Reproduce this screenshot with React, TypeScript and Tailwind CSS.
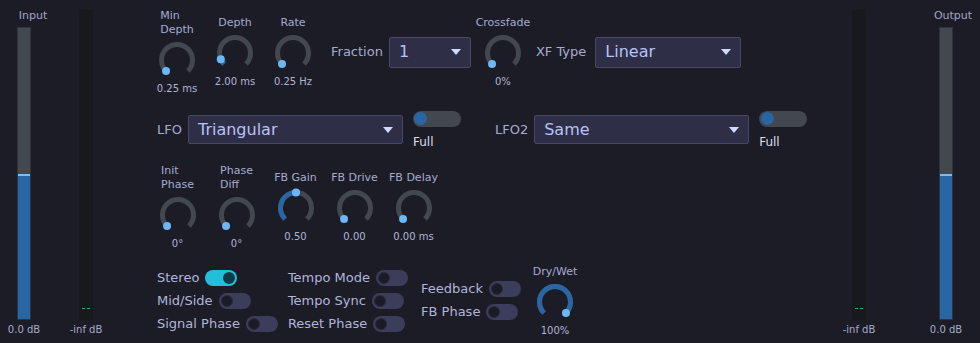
import React from 'react';

const R = 15.5;
function pt(deg: number): [number, number] {
  const r = (deg * Math.PI) / 180;
  return [18 + R * Math.sin(r), 18 - R * Math.cos(r)];
}

function KnobSvg({ v }: { v: number }) {
  const [sx, sy] = pt(-135);
  const [ex, ey] = pt(135);
  const a = -135 + 270 * v;
  const [vx, vy] = pt(a);
  const sweep = 270 * v;
  return (
    <svg width="36" height="36" viewBox="0 0 36 36" className="block overflow-visible">
      <path d={`M ${sx} ${sy} A ${R} ${R} 0 1 1 ${ex} ${ey}`} fill="none" stroke="#43474e" strokeWidth="5" />
      {v > 0 && (
        <path
          d={`M ${sx} ${sy} A ${R} ${R} 0 ${sweep > 180 ? 1 : 0} 1 ${vx} ${vy}`}
          fill="none"
          stroke="#2a66a3"
          strokeWidth="5"
        />
      )}
      <circle cx={vx} cy={vy} r="4" fill="#6cb8f6" />
    </svg>
  );
}

function Knob({
  label,
  value,
  v = 0,
  className = '',
}: {
  label: React.ReactNode;
  value: string;
  v?: number;
  className?: string;
}) {
  return (
    <div className={`flex flex-col items-center gap-[5px] ${className}`}>
      <div className="whitespace-nowrap text-left text-[11px] leading-[14px] text-[#a6abd0]">{label}</div>
      <KnobSvg v={v} />
      <div className="whitespace-nowrap text-[10px] leading-[12px] text-[#b0b4d4]">{value}</div>
    </div>
  );
}

function Toggle({ on = false }: { on?: boolean }) {
  return on ? (
    <div className="flex h-[16px] w-[32px] shrink-0 items-center justify-end rounded-full bg-[#22bfdb] px-[2px]">
      <div className="h-[12px] w-[12px] rounded-full bg-[#0c3a45]" />
    </div>
  ) : (
    <div className="flex h-[16px] w-[32px] shrink-0 items-center rounded-full bg-[#3c3c5b] px-[2px]">
      <div className="h-[12px] w-[12px] rounded-full border border-[#2a2a3c] bg-[#1b1b27]" />
    </div>
  );
}

function WideToggle() {
  return (
    <div className="flex flex-col items-start">
      <div className="flex h-[16px] w-[48px] items-center rounded-full bg-[#43474e] px-[1.5px]">
        <div className="h-[13px] w-[13px] rounded-full bg-[#2a66a3]" />
      </div>
      <div className="mt-[8px] whitespace-nowrap text-[12px] leading-[14px] text-[#dcdde8]">Full</div>
    </div>
  );
}

function Dropdown({ text, className = '' }: { text: string; className?: string }) {
  return (
    <div
      className={`flex items-center justify-between rounded-[2px] border border-[#464868] bg-[#2e2f47] pl-[9px] pr-[9px] ${className}`}
    >
      <span className="whitespace-nowrap text-[16px] leading-none text-[#b9c1f6]">{text}</span>
      <svg width="10" height="6" viewBox="0 0 10 6" className="block">
        <path d="M0 0 L10 0 L5 6 Z" fill="#d4d8fb" />
      </svg>
    </div>
  );
}

function LevelMeter() {
  return (
    <div className="flex h-[293px] w-[14px] flex-col justify-end border border-[#30333a] bg-[#43474e]">
      <div className="h-[2px] bg-[#7cbcf5]" />
      <div className="h-[143px] bg-[#2a66a3]" />
    </div>
  );
}

function DarkMeter() {
  return (
    <div className="flex h-[311px] w-[14px] flex-col items-center justify-end bg-[#18191c] pb-[11px]">
      <div className="flex gap-[2px]">
        <div className="h-[1px] w-[3px] bg-[#1fb36b]" />
        <div className="h-[1px] w-[3px] bg-[#1fb36b]" />
      </div>
    </div>
  );
}

function Labeled({ text, on }: { text: string; on?: boolean }) {
  return (
    <div className="flex h-[23px] items-center gap-[6px]">
      <span className="whitespace-nowrap text-[13px] leading-[16px] text-[#b0b5da]">{text}</span>
      <Toggle on={on} />
    </div>
  );
}

export default function App() {
  return (
    <div className="flex h-[343px] w-[980px] overflow-hidden bg-[#1c1c27] font-['DejaVu_Sans',sans-serif]">
      {/* left meters */}
      <div className="flex">
        <div className="flex w-[48px] flex-col items-center pt-[9px]">
          <div className="ml-[18px] h-[18px] whitespace-nowrap text-[11px] leading-[14px] text-[#a0a5c7]">Input</div>
          <LevelMeter />
          <div className="mt-[4px] whitespace-nowrap text-[10px] leading-[12px] text-[#a6abcb]">0.0 dB</div>
        </div>
        <div className="ml-[18px] flex w-[40px] flex-col items-center pt-[9px]">
          <DarkMeter />
          <div className="mt-[4px] whitespace-nowrap text-[10px] leading-[12px] text-[#a6abcb]">-inf dB</div>
        </div>
      </div>

      {/* center */}
      <div className="ml-[42px] flex flex-1 flex-col pt-[9px]">
        <div className="flex h-[86px] items-center">
          <Knob className="w-[58px]" label={<>Min<br />Depth</>} value="0.25 ms" v={0} />
          <Knob className="w-[58px]" label="Depth" value="2.00 ms" v={0.08} />
          <Knob className="w-[58px]" label="Rate" value="0.25 Hz" v={0} />
          <span className="ml-[9px] whitespace-nowrap text-[13px] text-[#a6abd0]">Fraction</span>
          <Dropdown className="ml-[6px] h-[31px] w-[82px]" text="1" />
          <Knob className="ml-[3px] w-[58px]" label="Crossfade" value="0%" v={0} />
          <span className="ml-[4px] whitespace-nowrap text-[13px] text-[#a6abd0]">XF Type</span>
          <Dropdown className="ml-[9px] h-[31px] w-[146px]" text="Linear" />
        </div>

        <div className="flex h-[69px] items-center">
          <span className="ml-[9px] whitespace-nowrap text-[13px] text-[#a6abd0]">LFO</span>
          <Dropdown className="ml-[6px] h-[29px] w-[215px]" text="Triangular" />
          <div className="ml-[10px]">
            <WideToggle />
          </div>
          <span className="ml-[34px] whitespace-nowrap text-[13px] text-[#a6abd0]">LFO2</span>
          <Dropdown className="ml-[6px] h-[29px] w-[215px]" text="Same" />
          <div className="ml-[10px]">
            <WideToggle />
          </div>
        </div>

        <div className="flex h-[86px] items-center">
          <Knob className="w-[59px]" label={<>Init<br />Phase</>} value="0°" v={0} />
          <Knob className="w-[59px]" label={<>Phase<br />Diff</>} value="0°" v={0} />
          <Knob className="w-[59px]" label="FB Gain" value="0.50" v={0.5} />
          <Knob className="w-[59px]" label="FB Drive" value="0.00" v={0} />
          <Knob className="w-[59px]" label="FB Delay" value="0.00 ms" v={0} />
        </div>

        <div className="mt-[8px] flex h-[85px] items-center">
          <div className="ml-[9px] flex flex-col items-start">
            <Labeled text="Stereo" on />
            <Labeled text="Mid/Side" />
            <Labeled text="Signal Phase" />
          </div>
          <div className="ml-[10px] flex flex-col items-start">
            <Labeled text="Tempo Mode" />
            <Labeled text="Tempo Sync" />
            <Labeled text="Reset Phase" />
          </div>
          <div className="ml-[13px] flex flex-col items-start">
            <Labeled text="Feedback" />
            <Labeled text="FB Phase" />
          </div>
          <Knob className="ml-[10px] w-[48px]" label="Dry/Wet" value="100%" v={1} />
        </div>
      </div>

      {/* right meters */}
      <div className="flex pr-[10px]">
        <div className="flex w-[40px] flex-col items-center pt-[9px]">
          <DarkMeter />
          <div className="mt-[4px] whitespace-nowrap text-[10px] leading-[12px] text-[#a6abcb]">-inf dB</div>
        </div>
        <div className="ml-[43px] flex w-[48px] flex-col items-center pt-[9px]">
          <div className="ml-[14px] h-[18px] whitespace-nowrap text-[11px] leading-[14px] text-[#a0a5c7]">Output</div>
          <LevelMeter />
          <div className="mt-[4px] whitespace-nowrap text-[10px] leading-[12px] text-[#a6abcb]">0.0 dB</div>
        </div>
      </div>
    </div>
  );
}
